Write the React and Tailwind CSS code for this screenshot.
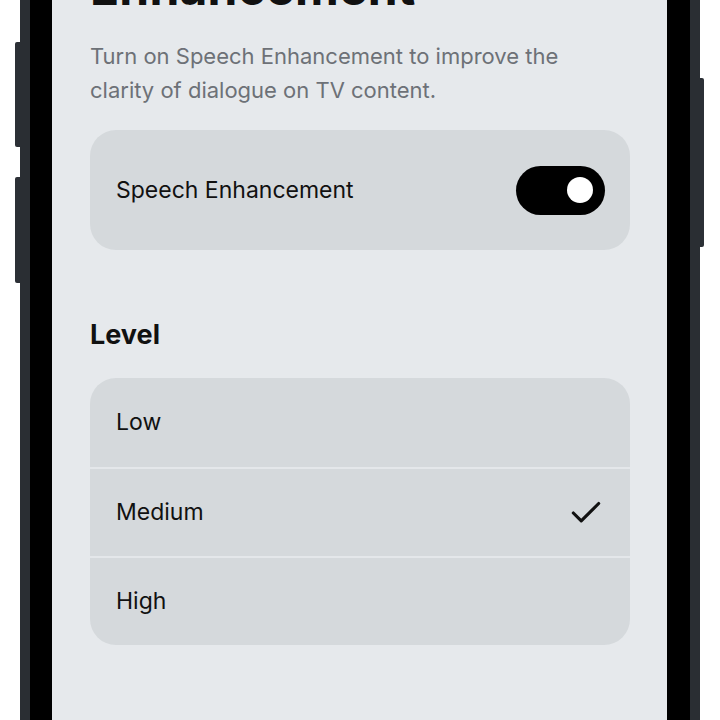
import { Check } from "lucide-react";

const levels = ["Low", "Medium", "High"];

const App = () => {
    const selected = "Medium";

    return (
        <div className="w-[720px] h-[720px] bg-white relative overflow-hidden" style={{ fontFamily: "Inter, 'Noto Sans', sans-serif" }}>
            {/* side buttons */}
            <div className="absolute left-[15px] top-[42px] w-[6px] h-[105px] rounded-l-[2px] bg-[#2c3036]" />
            <div className="absolute left-[15px] top-[177px] w-[6px] h-[106px] rounded-l-[2px] bg-[#2c3036]" />
            <div className="absolute left-[699px] top-[78px] w-[5px] h-[169px] rounded-r-[2px] bg-[#2c3036]" />

            {/* phone frame */}
            <div className="absolute left-[20px] top-0 w-[680px] h-[720px] flex bg-[#2a2e33] px-[10px]">
                <div className="flex-1 flex bg-black pl-[22px] pr-[23px]">
                    {/* screen */}
                    <main className="flex-1 bg-[#e6e9ec] pl-[38px] pr-[37px] overflow-hidden">
                        <h1 className="text-[48px] leading-[56px] font-bold text-[#111] mt-[-40px] tracking-[0.2px]">Enhancement</h1>

                        <p className="text-[22px] leading-[34px] text-[#6d7177] mt-[23px] max-w-[520px]">
                            Turn on Speech Enhancement to improve the clarity of dialogue on TV content.
                        </p>

                        <div className="mt-[23px] h-[120px] rounded-[26px] bg-[#d5d9dc] flex items-center justify-between pl-[26px] pr-[25px]">
                            <span className="text-[23px] text-[#111]">Speech Enhancement</span>
                            <div className="w-[89px] h-[49px] rounded-full bg-black flex items-center justify-end pr-[12px]">
                                <div className="w-[26px] h-[26px] rounded-full bg-white" />
                            </div>
                        </div>

                        <h2 className="mt-[67px] text-[27px] leading-[36px] font-bold text-[#111]">Level</h2>

                        <div className="mt-[25px] rounded-[26px] bg-[#d5d9dc] overflow-hidden">
                            {levels.map((level, i) => (
                                <div key={level} className={`h-[89px] flex items-center justify-between pl-[26px] pr-[25px] ${i > 0 ? "border-t-2 border-[#e4e7ea]" : ""}`}>
                                    <span className="text-[23px] text-[#111]">{level}</span>
                                    {level === selected && <Check size={38} strokeWidth={2} className="text-[#111]" />}
                                </div>
                            ))}
                        </div>
                    </main>
                </div>
            </div>
        </div>
    );
};

export default App;
